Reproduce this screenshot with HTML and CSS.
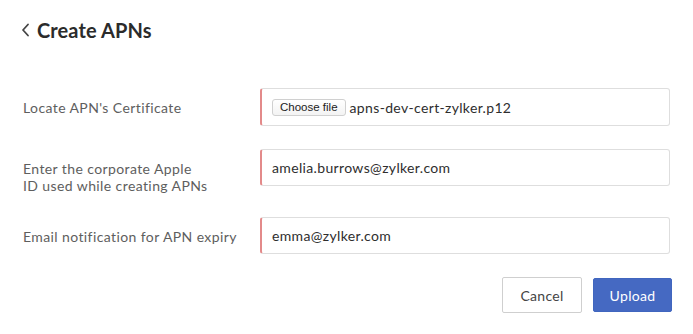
FILE: index.html
```html
<!DOCTYPE html>
<html>
<head>
<meta charset="utf-8">
<link rel="stylesheet" href="styles.css">
</head>
<body>
<div class="page">
  <header class="header">
    <svg class="back" width="9" height="14" viewBox="0 0 9 14"><path d="M7 1.5 L2 7 L7 12.5" fill="none" stroke="#444" stroke-width="1.8" stroke-linecap="round" stroke-linejoin="round"/></svg>
    <h1 class="title">Create APNs</h1>
  </header>
  <form class="form">
    <div class="label">Locate APN's Certificate</div>
    <div class="field">
      <span class="file-btn">Choose file</span>
      <span class="value">apns-dev-cert-zylker.p12</span>
    </div>
    <div class="label">Enter the corporate Apple<br>ID used while creating APNs</div>
    <div class="field"><span class="value pad">amelia.burrows@zylker.com</span></div>
    <div class="label">Email notification for APN expiry</div>
    <div class="field"><span class="value pad">emma@zylker.com</span></div>
  </form>
  <div class="actions">
    <button type="button" class="btn cancel">Cancel</button>
    <button type="button" class="btn upload">Upload</button>
  </div>
</div>
</body>
</html>
```

FILE: styles.css
```css
* { box-sizing: border-box; }
html, body { margin: 0; padding: 0; background: #fff; }
body { font-family: Lato, "Open Sans", Arial, sans-serif; color: #333; }
.page { width: 693px; height: 334px; }
.header { display: flex; align-items: center; padding: 17px 0 0 21px; height: 42px; }
.back { margin-right: 7px; margin-top: 1px; }
.title { margin: 0; font-size: 20px; font-weight: 700; color: #2b2b2b; line-height: 24px; letter-spacing: 0.1px; }
.form { display: grid; grid-template-columns: 237px 410px; row-gap: 23px; padding: 46px 0 0 23px; align-items: start; }
.label { font-size: 14px; line-height: 17px; color: #5e5e5e; padding-top: 11px; letter-spacing: 0.4px; }
.field { height: 38px; border: 1px solid #dedede; border-left: 2px solid #e38a8a; border-radius: 3px; display: flex; align-items: center; padding-left: 10px; }
.field + .label + .field { height: 37px; }
.value { font-size: 14px; color: #2e2e2e; letter-spacing: 0.35px; }
.file-btn { font-family: "Liberation Sans", Arial, sans-serif; font-size: 11.5px; color: #222; border: 1px solid #d0d0d0; border-radius: 3px; padding: 0 7px; height: 17px; line-height: 15px; margin-right: 4px; background: linear-gradient(#fff, #f3f3f3); }
.actions { display: flex; justify-content: flex-end; gap: 11px; padding: 23px 21px 0 0; align-items: flex-start; }
.btn { font-family: Lato, "Open Sans", Arial, sans-serif; font-size: 14px; border-radius: 2px; cursor: pointer; letter-spacing: 0.3px; }
.cancel { width: 80px; height: 36px; background: #fff; border: 1px solid #cfcfcf; color: #444; }
.upload { width: 79px; height: 34px; margin-top: 1px; background: #4569c2; border: 1px solid #4066bf; color: #fff; }
```
